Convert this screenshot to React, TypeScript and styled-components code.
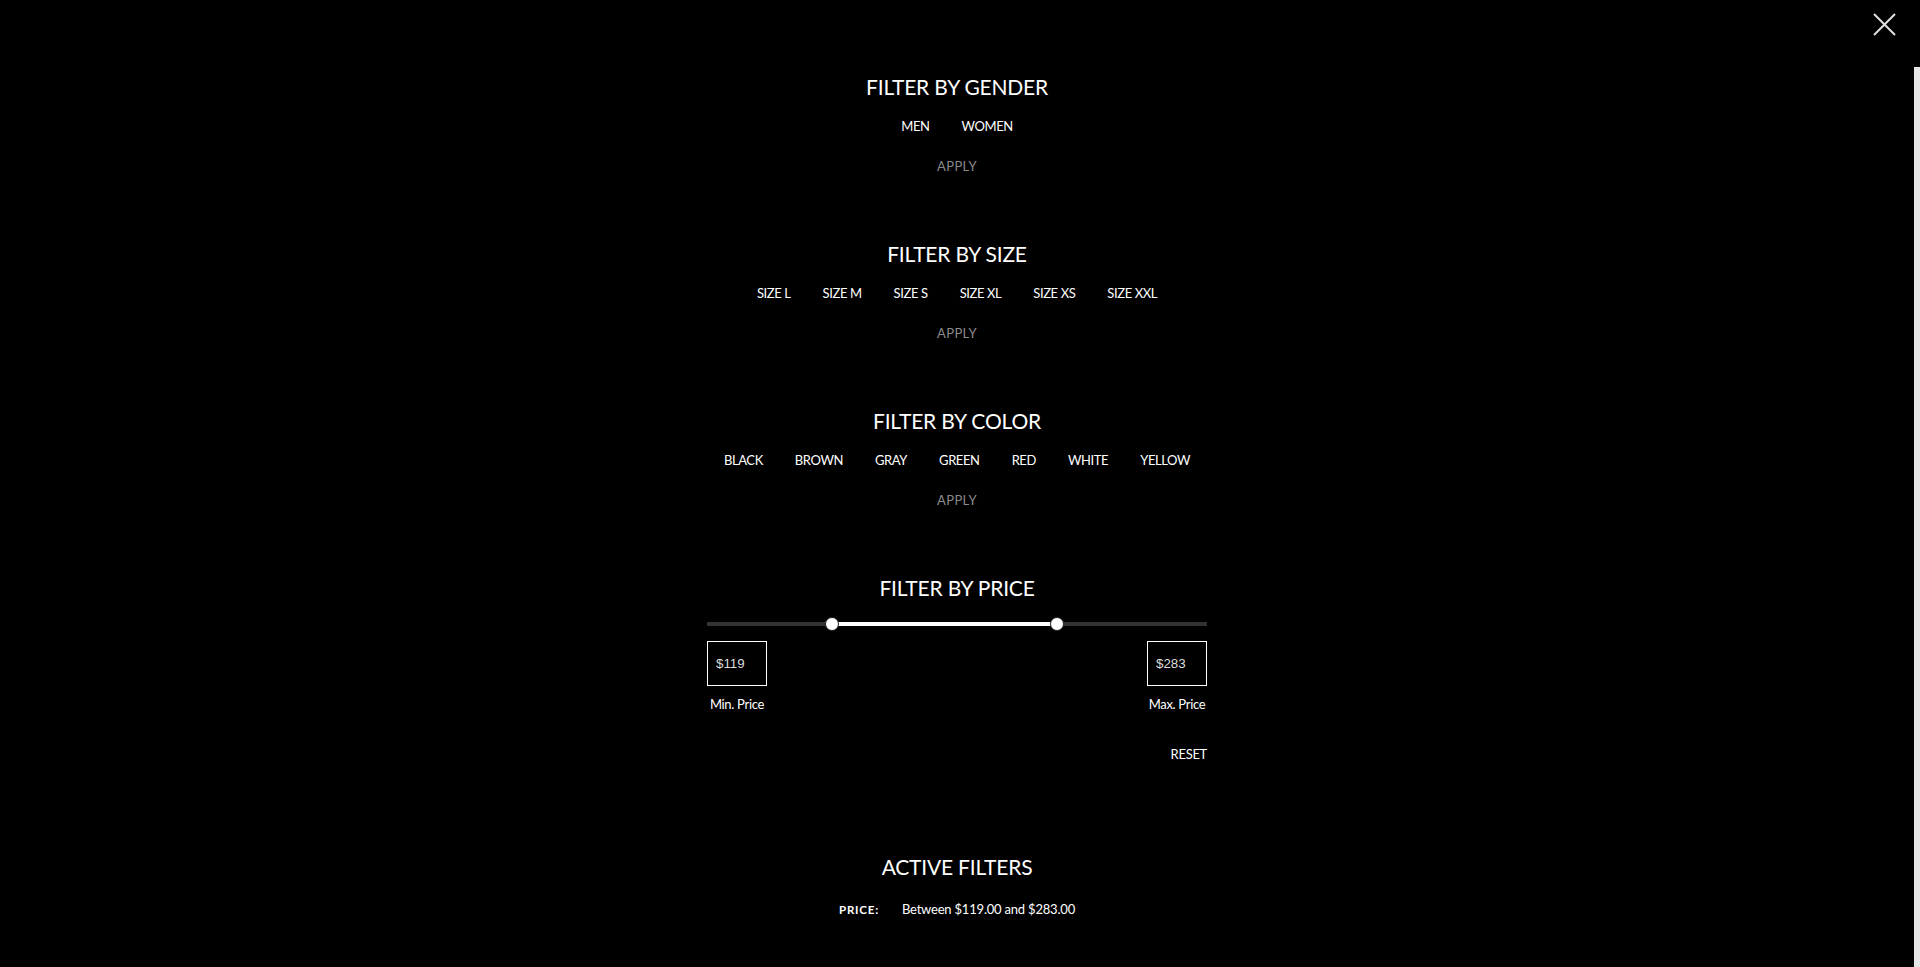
import React from "react";
import styled, { createGlobalStyle } from "styled-components";

const Global = createGlobalStyle`
  html, body { margin: 0; padding: 0; background: #000; }
  body { font-family: Lato, "Open Sans", sans-serif; color: #fff; }
  * { box-sizing: border-box; }
`;

const Page = styled.div`
  display: flex;
  height: 967px;
  overflow: hidden;
  background: #000;
  position: relative;
`;

const Main = styled.main`
  flex: 1;
  display: flex;
  flex-direction: column;
  align-items: center;
  padding-top: 75px;
`;

const Strip = styled.div`
  flex: none;
  width: 6px;
  margin-top: 67px;
  background: #e6e6e6;
`;

const Close = styled.button`
  position: absolute;
  top: 13px;
  right: 24px;
  width: 23px;
  height: 23px;
  padding: 0;
  border: 0;
  background: transparent;
  cursor: pointer;
  display: flex;
`;

const Section = styled.section<{ $after?: number }>`
  display: flex;
  flex-direction: column;
  align-items: center;
  margin-bottom: ${(p) => p.$after ?? 66}px;
`;

const Title = styled.h2<{ $tight?: boolean }>`
  margin: 0 0 ${(p) => (p.$tight ? 0 : 17)}px;
  font-size: 21px;
  line-height: 24px;
  font-weight: 400;
  letter-spacing: -0.2px;
  color: #fff;
  text-transform: uppercase;
`;

const Options = styled.div`
  display: flex;
  gap: 32px;
  margin-bottom: 20px;
`;

const Option = styled.button`
  padding: 0;
  border: 0;
  background: none;
  font-family: inherit;
  font-size: 13px;
  line-height: 20px;
  letter-spacing: -0.4px;
  color: #fff;
  cursor: pointer;
`;

const Apply = styled.button`
  padding: 0;
  border: 0;
  background: none;
  font-family: inherit;
  font-size: 13px;
  line-height: 20px;
  letter-spacing: 0.4px;
  color: #8a8a8a;
  cursor: pointer;
`;

const PriceBlock = styled.div`
  width: 500px;
  display: flex;
  flex-direction: column;
`;

const Slider = styled.div`
  position: relative;
  height: 14px;
  margin-top: 17px;
`;

const Track = styled.div`
  position: absolute;
  left: 0;
  right: 0;
  top: 5px;
  height: 4px;
  background: #333;
`;

const Range = styled.div`
  position: absolute;
  top: 5px;
  height: 4px;
  background: #fff;
`;

const Handle = styled.div`
  position: absolute;
  top: 0;
  width: 14px;
  height: 14px;
  margin-left: -7px;
  border-radius: 50%;
  background: #fff;
  border: 1px solid #222;
`;

const Fields = styled.div`
  display: flex;
  justify-content: space-between;
  margin-top: 10px;
`;

const Field = styled.label`
  width: 60px;
  display: flex;
  flex-direction: column;
  align-items: center;
`;

const PriceInput = styled.input`
  width: 60px;
  height: 45px;
  padding: 0 0 0 8px;
  border: 1px solid #fff;
  background: #000;
  color: #ddd;
  font-family: "Liberation Sans", Arial, sans-serif;
  font-size: 13.33px;
  outline: none;
`;

const FieldLabel = styled.span`
  margin-top: 8px;
  font-size: 13px;
  line-height: 20px;
  letter-spacing: -0.3px;
  white-space: nowrap;
  color: #fff;
`;

const Reset = styled.button`
  align-self: flex-end;
  margin-top: 30px;
  padding: 0;
  border: 0;
  background: none;
  font-family: inherit;
  font-size: 13px;
  line-height: 20px;
  letter-spacing: -0.3px;
  color: #fff;
  cursor: pointer;
`;

const ActiveRow = styled.div`
  display: flex;
  align-items: baseline;
  gap: 23px;
  margin-top: 3px;
`;

const ActiveKey = styled.span`
  font-size: 11.5px;
  font-weight: 700;
  letter-spacing: 0.8px;
  line-height: 20px;
  color: #fff;
`;

const ActiveValue = styled.span`
  font-size: 13px;
  line-height: 20px;
  letter-spacing: -0.2px;
  color: #fff;
`;

const genders = ["MEN", "WOMEN"];
const sizes = ["SIZE L", "SIZE M", "SIZE S", "SIZE XL", "SIZE XS", "SIZE XXL"];
const colors = ["BLACK", "BROWN", "GRAY", "GREEN", "RED", "WHITE", "YELLOW"];

const MIN = 28;
const MAX = 392;
const lo = 119;
const hi = 283;

function FilterGroup({ title, options }: { title: string; options: string[] }) {
  return (
    <Section>
      <Title>{title}</Title>
      <Options>
        {options.map((o) => (
          <Option key={o}>{o}</Option>
        ))}
      </Options>
      <Apply>APPLY</Apply>
    </Section>
  );
}

export default function App() {
  const l = ((lo - MIN) / (MAX - MIN)) * 100;
  const h = ((hi - MIN) / (MAX - MIN)) * 100;
  return (
    <>
      <Global />
      <Page>
        <Main>
          <FilterGroup title="Filter by gender" options={genders} />
          <FilterGroup title="Filter by size" options={sizes} />
          <FilterGroup title="Filter by color" options={colors} />
          <Section $after={91}>
            <Title $tight>Filter by price</Title>
            <PriceBlock>
              <Slider>
                <Track />
                <Range style={{ left: `${l}%`, width: `${h - l}%` }} />
                <Handle style={{ left: `${l}%` }} />
                <Handle style={{ left: `${h}%` }} />
              </Slider>
              <Fields>
                <Field>
                  <PriceInput defaultValue={`$${lo}`} />
                  <FieldLabel>Min. Price</FieldLabel>
                </Field>
                <Field>
                  <PriceInput defaultValue={`$${hi}`} />
                  <FieldLabel>Max. Price</FieldLabel>
                </Field>
              </Fields>
              <Reset>RESET</Reset>
            </PriceBlock>
          </Section>
          <Section $after={0}>
            <Title>Active filters</Title>
            <ActiveRow>
              <ActiveKey>PRICE:</ActiveKey>
              <ActiveValue>Between $119.00 and $283.00</ActiveValue>
            </ActiveRow>
          </Section>
        </Main>
        <Strip />
        <Close aria-label="Close">
          <svg width="23" height="23" viewBox="0 0 23 23">
            <path d="M1 1L22 22M22 1L1 22" stroke="#e0e0e0" strokeWidth="2" fill="none" />
          </svg>
        </Close>
      </Page>
    </>
  );
}
